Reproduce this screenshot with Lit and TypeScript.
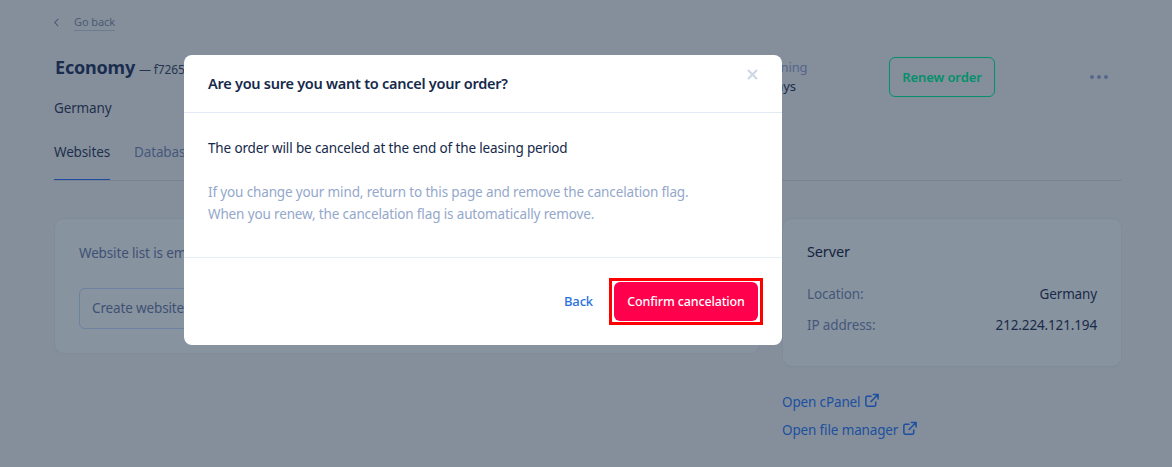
import { LitElement, html, css } from "lit";
import { customElement } from "lit/decorators.js";

@customElement("app-root")
export class AppRoot extends LitElement {
  static styles = css`
    :host {
      display: block;
      position: relative;
      width: 1172px;
      height: 467px;
      overflow: hidden;
      background: #858f9c;
      font-family: "Noto Sans", "Open Sans", sans-serif;
      font-size: 13.5px;
      letter-spacing: -0.14px;
      color: #1a2b48;
    }
    * { box-sizing: border-box; }
    .page { padding: 14px 50px 0 54px; }
    .back { display: flex; align-items: center; height: 17px; font-size: 11px; letter-spacing: -0.1px; color: #4b5a72; gap: 15px; }
    .back svg { display: block; }
    .back span { border-bottom: 1px solid #6e7b8e; line-height: 16px; height: 17px; }
    .head { display: flex; align-items: flex-start; margin-top: 23px; height: 43px; }
    .title { display: flex; align-items: baseline; gap: 4px; flex: none; width: 689px; padding-left: 1px; height: 27px; }
    .title b { font-size: 18px; letter-spacing: -0.2px; font-weight: 700; color: #1a2d4f; line-height: 27px; }
    .title span { font-size: 12px; color: #26354f; }
    .status { width: 146px; flex: none; padding-top: 4px; }
    .status .l { font-size: 13px; color: #55648a; line-height: 18px; }
    .status .v { font-size: 13px; line-height: 20px; color: #1a2b48; }
    .renew { flex: none; width: 106px; height: 40px; margin-top: 3px; border: 1px solid #03906a; border-radius: 6px; color: #03906a; font-size: 13px; letter-spacing: -0.1px; font-weight: 600; display: flex; align-items: center; justify-content: center; }
    .dots { display: flex; gap: 3px; margin: 21px 0 0 95px; }
    .dots i { width: 4px; height: 4px; border-radius: 50%; background: #57678a; }
    .country { margin-top: 1px; line-height: 20px; color: #1f2f4b; }
    .tabs { display: flex; gap: 24px; margin-top: 23px; border-bottom: 1px solid #788494; height: 40px; }
    .tab { height: 39px; line-height: 22px; color: #46587a; }
    .tab.on { color: #1f2f4b; border-bottom: 1px solid #1e4b9c; }
    .cols { display: grid; grid-template-columns: 706px 340px; column-gap: 22px; margin-top: 37px; align-items: start; }
    .card { border: 1px solid #7f8b9b; border-radius: 10px; background: #8893a0; padding: 23px 24px; }
    .left { height: 136px; }
    .left p { margin: 0; color: #3e5173; line-height: 22px; }
    .create { display: inline-flex; align-items: center; height: 41px; padding: 0 12px 2px; margin-top: 24px; border: 1px solid #6d81a1; border-radius: 6px; color: #3e5173; width: 180px; }
    .right { height: 149px; padding-top: 22px; }
    h3 { margin: 0 0 18px; font-weight: 400; font-size: 14.5px; line-height: 20px; color: #14243f; }
    .row { display: flex; justify-content: space-between; line-height: 31px; height: 31px; color: #1a2b48; }
    .row span:first-child { color: #45587a; }
    .links { display: flex; flex-direction: column; gap: 8px; margin-top: 25px; }
    .links a { display: flex; align-items: center; gap: 4px; color: #1c4f9e; line-height: 20px; }
    .links svg { display: block; margin-top: -3px; }
    .scrim { position: absolute; inset: 0; }
    .modal { position: absolute; left: 184px; top: 55px; width: 598px; height: 290px; background: #fff; border-radius: 8px; display: flex; flex-direction: column; }
    .m-head { height: 58px; border-bottom: 1px solid #e2e9f5; padding: 0 24px 2px; display: flex; align-items: center; position: relative; }
    .m-head b { font-size: 14.5px; letter-spacing: -0.26px; font-weight: 600; color: #15294b; }
    .close { position: absolute; right: 24px; top: 14px; display: block; }
    .m-body { height: 145px; padding: 24px 24px 0; border-bottom: 1px solid #e8edf3; }
    .m-body p { margin: 0; line-height: 22px; color: #15294b; }
    .m-body p.hint { margin-top: 22px; color: #94a8cb; }
    .m-foot { flex: 1; display: flex; justify-content: flex-end; align-items: center; padding-right: 19px; gap: 16px; }
    .m-foot a { color: #2a6fe0; font-size: 13px; font-weight: 500; padding-bottom: 2px; }
    .focus { border: 3px solid #ff0000; padding: 1px 2px; }
    .confirm { width: 144px; height: 39px; padding-bottom: 1px; background: #ff004c; color: #fff; border-radius: 6px; font-size: 12.5px; font-weight: 500; display: flex; align-items: center; justify-content: center; }
  `;

  private ext() {
    return html`<svg width="15" height="15" viewBox="0 0 16 16" fill="none" stroke="#1c4f9e" stroke-width="1.6" stroke-linecap="round" stroke-linejoin="round">
      <path d="M7.5 3.5H3.5a1.5 1.5 0 0 0-1.5 1.5v7.5a1.5 1.5 0 0 0 1.5 1.5H11a1.5 1.5 0 0 0 1.5-1.5V9.5" />
      <path d="M10 1.5h5v5M15 1.5 7.5 9" />
    </svg>`;
  }

  render() {
    return html`
      <div class="page">
        <div class="back">
          <svg width="5" height="9" viewBox="0 0 5 9" fill="none" stroke="#4b5a72" stroke-width="1.1"><path d="M4.2 .8.8 4.5l3.4 3.7" /></svg>
          <span>Go back</span>
        </div>
        <div class="head">
          <div class="title"><b>Economy</b><span>— f7265...</span></div>
          <div class="status"><div class="l">Remaining</div><div class="v">365 days</div></div>
          <div class="renew">Renew order</div>
          <div class="dots"><i></i><i></i><i></i></div>
        </div>
        <div class="country">Germany</div>
        <div class="tabs">
          <div class="tab on">Websites</div>
          <div class="tab">Databases</div>
        </div>
        <div class="cols">
          <div class="card left">
            <p>Website list is empty</p>
            <div class="create">Create website</div>
          </div>
          <div>
            <div class="card right">
              <h3>Server</h3>
              <div class="row"><span>Location:</span><span>Germany</span></div>
              <div class="row"><span>IP address:</span><span>212.224.121.194</span></div>
            </div>
            <div class="links">
              <a>Open cPanel${this.ext()}</a>
              <a>Open file manager${this.ext()}</a>
            </div>
          </div>
        </div>
      </div>
      <div class="scrim">
        <div class="modal">
          <div class="m-head">
            <b>Are you sure you want to cancel your order?</b>
            <svg class="close" width="11" height="11" viewBox="0 0 11 11" stroke="#cdd7e6" stroke-width="2.2"><path d="M1 1l9 9M10 1l-9 9" /></svg>
          </div>
          <div class="m-body">
            <p>The order will be canceled at the end of the leasing period</p>
            <p class="hint">If you change your mind, return to this page and remove the cancelation flag.<br />When you renew, the cancelation flag is automatically remove.</p>
          </div>
          <div class="m-foot">
            <a>Back</a>
            <div class="focus"><div class="confirm">Confirm cancelation</div></div>
          </div>
        </div>
      </div>
    `;
  }
}
